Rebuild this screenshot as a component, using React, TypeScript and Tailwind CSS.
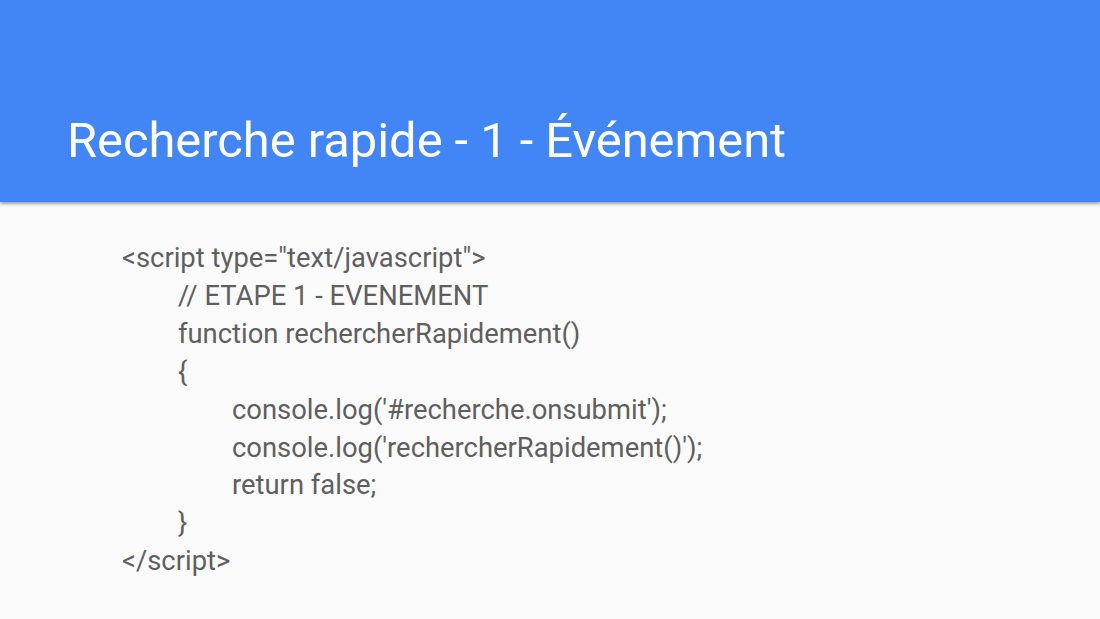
const LINES: { text: string; indent: number }[] = [
  { text: '<script type="text/javascript">', indent: 0 },
  { text: "// ETAPE 1 - EVENEMENT", indent: 1 },
  { text: "function rechercherRapidement()", indent: 1 },
  { text: "{", indent: 1 },
  { text: "console.log('#recherche.onsubmit');", indent: 2 },
  { text: "console.log('rechercherRapidement()');", indent: 2 },
  { text: "return false;", indent: 2 },
  { text: "}", indent: 1 },
  { text: "</script>", indent: 0 },
];

const INDENT = ["pl-0", "pl-[56px]", "pl-[110px]"];

export default function App() {
  return (
    <div className="w-[1100px] h-[619px] overflow-hidden bg-[#fafafa] font-['Roboto',sans-serif] flex flex-col">
      {/* Title bar */}
      <header className="relative z-10 h-[202px] shrink-0 bg-[#4285f4] shadow-[0_2px_3px_rgba(0,0,0,0.35)] flex items-end pl-[67px] pb-[36px]">
        <h1 className="text-[48.8px] leading-none text-white font-normal">
          Recherche rapide - 1 - Événement
        </h1>
      </header>

      {/* Code body */}
      <main className="flex-1 pl-[122px] pt-[38px]">
        {LINES.map((l, i) => (
          <div
            key={i}
            className={`${INDENT[l.indent]} text-[27.4px] leading-[37.9px] text-[#5f5f5f] whitespace-pre`}
          >
            {l.text}
          </div>
        ))}
      </main>
    </div>
  );
}
